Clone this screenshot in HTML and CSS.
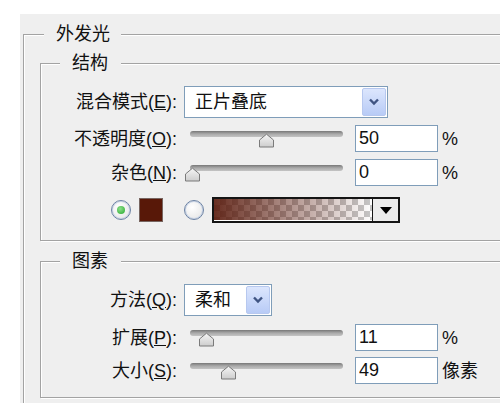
FILE: index.html
```html
<!DOCTYPE html>
<html lang="zh-CN">

<head>
  <meta charset="UTF-8">
  <title>外发光</title>
  <link rel="stylesheet" href="styles.css">
</head>

<body>
  <div class="panel">
    <div class="group outer">
      <div class="group-title">外发光</div>

      <div class="group inner structure">
        <div class="group-title">结构</div>

        <div class="row row-first">
          <span class="label">混合模式(<u>E</u>):</span>
          <div class="select select-blend">
            <span class="select-text">正片叠底</span>
            <span class="select-btn"><svg width="12" height="8" viewBox="0 0 12 8"><path d="M2 1.5 L6 5.5 L10 1.5" fill="none" stroke="#3f5482" stroke-width="2.4"/></svg></span>
          </div>
        </div>

        <div class="row">
          <span class="label">不透明度(<u>O</u>):</span>
          <div class="slider">
            <div class="track"></div>
            <svg class="thumb" style="left: 74px" width="17" height="15" viewBox="0 0 17 15"><path d="M1.5 14 V7 L8.5 1.2 L15.5 7 V14 Z" fill="url(#thumbFill)" stroke="#7b7b7b" stroke-linejoin="round"/></svg>
          </div>
          <input class="field" type="text" value="50">
          <span class="unit">%</span>
        </div>

        <div class="row">
          <span class="label">杂色(<u>N</u>):</span>
          <div class="slider">
            <div class="track"></div>
            <svg class="thumb" style="left: 0px" width="17" height="15" viewBox="0 0 17 15"><path d="M1.5 14 V7 L8.5 1.2 L15.5 7 V14 Z" fill="url(#thumbFill)" stroke="#7b7b7b" stroke-linejoin="round"/></svg>
          </div>
          <input class="field" type="text" value="0">
          <span class="unit">%</span>
        </div>

        <div class="row row-color">
          <span class="radio checked"></span>
          <span class="swatch"></span>
          <span class="radio radio-gap"></span>
          <div class="gradient">
            <span class="gradient-bar"></span>
            <span class="gradient-btn"><svg width="12" height="7" viewBox="0 0 12 7"><path d="M0 0 H12 L6 7 Z" fill="#000"/></svg></span>
          </div>
        </div>
      </div>

      <div class="group inner elements">
        <div class="group-title">图素</div>

        <div class="row row-first">
          <span class="label">方法(<u>Q</u>):</span>
          <div class="select select-method">
            <span class="select-text">柔和</span>
            <span class="select-btn"><svg width="12" height="8" viewBox="0 0 12 8"><path d="M2 1.5 L6 5.5 L10 1.5" fill="none" stroke="#3f5482" stroke-width="2.4"/></svg></span>
          </div>
        </div>

        <div class="row row-spread">
          <span class="label">扩展(<u>P</u>):</span>
          <div class="slider">
            <div class="track"></div>
            <svg class="thumb" style="left: 14px" width="17" height="15" viewBox="0 0 17 15"><path d="M1.5 14 V7 L8.5 1.2 L15.5 7 V14 Z" fill="url(#thumbFill)" stroke="#7b7b7b" stroke-linejoin="round"/></svg>
          </div>
          <input class="field" type="text" value="11">
          <span class="unit">%</span>
        </div>

        <div class="row row-size">
          <span class="label">大小(<u>S</u>):</span>
          <div class="slider">
            <div class="track"></div>
            <svg class="thumb" style="left: 36px" width="17" height="15" viewBox="0 0 17 15"><path d="M1.5 14 V7 L8.5 1.2 L15.5 7 V14 Z" fill="url(#thumbFill)" stroke="#7b7b7b" stroke-linejoin="round"/></svg>
          </div>
          <input class="field" type="text" value="49">
          <span class="unit">像素</span>
        </div>
      </div>
    </div>
  </div>

  <!-- 滑块渐变 -->
  <svg width="0" height="0" class="defs">
    <defs>
      <linearGradient id="thumbFill" x1="0" y1="0" x2="0" y2="1">
        <stop offset="0" stop-color="#f6f6f6"/>
        <stop offset="1" stop-color="#cdcdcd"/>
      </linearGradient>
    </defs>
  </svg>
</body>

</html>
```

FILE: styles.css
```css
body {
  margin: 0;
  background: #fff;
  overflow: hidden;
  font-family: "Liberation Sans", "Noto Sans CJK SC", sans-serif;
  font-size: 18px;
  color: #111;
}

.panel {
  margin: 14px 0 0 20px;
  width: 480px;
  height: 389px;
  padding: 20px 0 0 3px;
  box-sizing: border-box;
  overflow: hidden;
  background: #efefef;
}

/* 分组框 */
.group {
  border: 1px solid #a3a3a3;
  box-shadow: inset 1px 1px 0 #fff, 1px 1px 0 #fff;
}

.group-title {
  width: max-content;
  height: 20px;
  line-height: 20px;
  margin: -11px 0 0 20px;
  padding: 0 11px 0 12px;
  background: #efefef;
}

.outer {
  width: 600px;
  height: 500px;
  padding-left: 16px;
}

.outer > .group-title {
  margin-left: 4px;
}

.inner .group-title {
  margin-left: 19px;
  padding: 0 13px 0 12px;
}

.structure {
  margin-top: 19px;
  padding-bottom: 17px;
}

.elements {
  margin-top: 20px;
  padding-bottom: 13px;
}

/* 行 */
.row {
  display: flex;
  align-items: center;
  margin-top: 7px;
}

.row-first {
  margin-top: 13px;
}

.row-color {
  margin-top: 11px;
  padding-left: 70px;
  height: 26px;
}

.row-spread {
  margin-top: 8px;
}

.row-size {
  margin-top: 6px;
}

.label {
  flex: none;
  width: 136px;
  text-align: right;
  line-height: 20px;
}

/* 下拉框 */
.select {
  display: flex;
  align-items: center;
  margin-left: 7px;
  height: 32px;
  padding: 0 1px 0 10px;
  box-sizing: border-box;
  border: 1px solid #7f9db9;
  background: #fff;
}

.select-blend {
  width: 204px;
}

.select-method {
  width: 88px;
}

.select-text {
  flex: 1;
  line-height: 20px;
}

.select-btn {
  display: flex;
  align-items: center;
  justify-content: center;
  width: 24px;
  height: 28px;
  box-sizing: border-box;
  border: 1px solid #b7c8ef;
  border-radius: 2px;
  background: linear-gradient(#dce6fd, #b8cbf6);
}

/* 滑块 */
.slider {
  position: relative;
  flex: none;
  width: 171px;
  height: 27px;
  margin-left: 7px;
}

.track {
  width: 153px;
  height: 6px;
  margin: 6px 0 0 6px;
  border-radius: 3px;
  background: linear-gradient(#777, #aaa 50%, #c4c4c4);
}

.thumb {
  position: absolute;
  top: 8px;
}

.field {
  width: 83px;
  height: 27px;
  box-sizing: border-box;
  margin: 0;
  padding: 0 3px;
  border: 1px solid #7f9db9;
  background: #fff;
  font-family: "Liberation Sans", sans-serif;
  font-size: 18px;
  color: #111;
}

.unit {
  margin-left: 4px;
  line-height: 20px;
}

/* 颜色 */
.radio {
  position: relative;
  width: 20px;
  height: 20px;
  box-sizing: border-box;
  border: 1px solid #6c82a3;
  border-radius: 50%;
  background: radial-gradient(circle at 40% 35%, #fff, #e2e2e2);
  box-shadow: inset 0 0 0 1px #c6d2e6;
}

.radio.checked::after {
  content: "";
  position: absolute;
  left: 5px;
  top: 5px;
  width: 8px;
  height: 8px;
  border-radius: 50%;
  background: radial-gradient(circle at 40% 35%, #8de08a, #26a82e);
}

.swatch {
  width: 24px;
  height: 24px;
  box-sizing: border-box;
  margin-left: 8px;
  border: 1px solid #776560;
  background: #581808;
}

.radio-gap {
  margin-left: 21px;
}

.gradient {
  display: flex;
  width: 188px;
  height: 26px;
  box-sizing: border-box;
  margin-left: 8px;
  border: 2px solid #151515;
}

.gradient-bar {
  flex: 1;
  border-right: 1px solid #151515;
  box-shadow: inset 0 -1px 0 #fff;
  background:
    linear-gradient(to right, rgba(88, 24, 10, 0.9), rgba(88, 24, 10, 0)),
    conic-gradient(#c6c6c6 90deg, #fff 90deg 180deg, #c6c6c6 180deg 270deg, #fff 270deg) 0 0 / 12px 12px;
}

.gradient-btn {
  display: flex;
  align-items: center;
  justify-content: center;
  width: 25px;
  background: #ececec;
}

.defs {
  position: absolute;
}
```
